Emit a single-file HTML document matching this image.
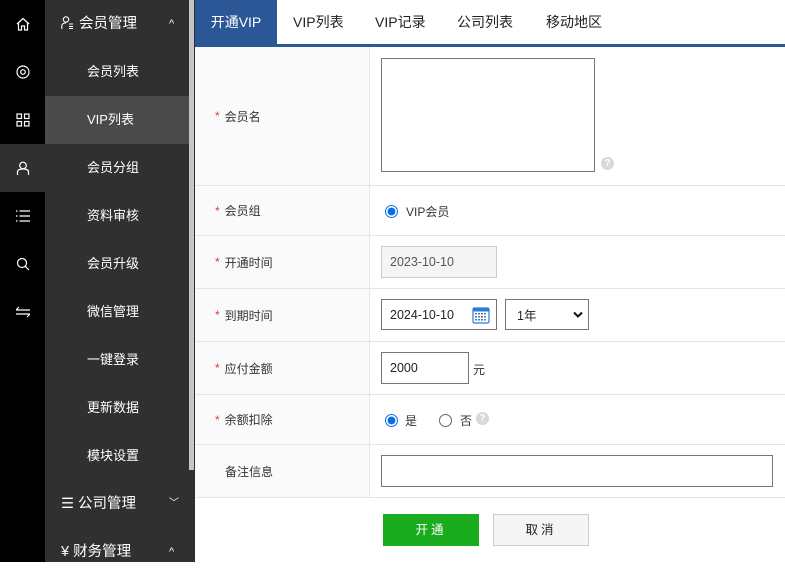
<!DOCTYPE html>
<html><head><meta charset="utf-8"><style>
*{margin:0;padding:0;box-sizing:border-box}
body{width:785px;height:562px;overflow:hidden;background:#fff;font-family:"Liberation Sans","Noto Sans CJK SC",sans-serif;font-size:13px;color:#333;position:relative}
.ic{position:absolute;left:0;top:0;width:45px;height:562px;background:#000}
.ic div{position:absolute;left:0;width:45px;height:48px;display:flex;align-items:center;justify-content:center}
.menu{position:absolute;left:45px;top:0;width:144px;height:562px;background:#303030;color:#fff}
.menu .it{position:absolute;left:0;width:144px;height:48px;line-height:48px;font-size:13px;padding-left:42px}
.menu .hd{padding-left:16px;font-size:14.5px}
.sb{position:absolute;left:189px;top:0;width:6px;height:562px;background:#2f2f2f}
.sb i{position:absolute;left:0;top:0;width:5px;height:470px;background:#c6c6c6}
.tabs{position:absolute;left:195px;top:0;width:590px;height:47px;border-bottom:3px solid #2b5797}
.tabs span{position:absolute;top:0;height:44px;line-height:44px;font-size:14px;color:#222}
.row{position:absolute;left:195px;width:590px;border-bottom:1px solid #e4e4e4}
.lab{position:absolute;left:0;top:0;bottom:0;width:175px;background:#fafafa;border-right:1px solid #e8e8e8;display:flex;align-items:center;padding-left:20px;font-size:12px}
.lab b{color:#e33;font-weight:normal;margin-right:5px}
.inp{position:absolute;border:1px solid #777;background:#fff;font-size:12.5px;color:#222;padding-left:8px;display:flex;align-items:center}
.radio{position:absolute;width:13px;height:13px;border-radius:50%;border:1px solid #666}
.radio.on{border:1px solid #0a6ee8;background:radial-gradient(circle,#0a6ee8 0 3.6px,#fff 4.2px)}
.q{position:absolute;width:13px;height:13px;border-radius:50%;background:#d8d8d8;color:#fff;font-size:10px;font-weight:bold;text-align:center;line-height:13px}
</style></head><body>
<div class="ic">
<div style="top:0"><svg width="16" height="16" viewBox="0 0 16 16" fill="none" stroke="#fff" stroke-width="1.2"><path d="M2 8L8 2.5 14 8M3.5 6.8V14h3v-4h3v4h3V6.8"/></svg></div>
<div style="top:48px"><svg width="16" height="16" viewBox="0 0 16 16" fill="none" stroke="#fff" stroke-width="1.2"><circle cx="8" cy="8" r="6"/><circle cx="8" cy="8" r="2.3"/></svg></div>
<div style="top:96px"><svg width="14" height="14" viewBox="0 0 14 14" fill="none" stroke="#fff" stroke-width="1.2"><rect x="1" y="1" width="4.5" height="4.5"/><rect x="8.5" y="1" width="4.5" height="4.5"/><rect x="1" y="8.5" width="4.5" height="4.5"/><rect x="8.5" y="8.5" width="4.5" height="4.5"/></svg></div>
<div style="top:144px;background:#303030"><svg width="14" height="14" viewBox="0 0 14 14" fill="none" stroke="#fff" stroke-width="1.2"><circle cx="7" cy="4.5" r="3.3"/><path d="M1.5 14V11q0-3 5.5-3t5.5 3v3"/></svg></div>
<div style="top:192px"><svg width="14" height="12" viewBox="0 0 14 12" fill="none" stroke="#fff" stroke-width="1.2"><path d="M0 1h1.5M3.5 1H14M0 6h1.5M3.5 6H14M0 11h1.5M3.5 11H14"/></svg></div>
<div style="top:240px"><svg width="14" height="14" viewBox="0 0 14 14" fill="none" stroke="#fff" stroke-width="1.2"><circle cx="6" cy="6" r="4.5"/><path d="M9.3 9.3L13 13"/></svg></div>
<div style="top:288px"><svg width="14" height="12" viewBox="0 0 14 12" fill="none" stroke="#fff" stroke-width="1.2"><path d="M0 4h14M0 4l3-3M14 8H0M14 8l-3 3"/></svg></div>
</div>
<div class="menu">
<div class="it hd" style="top:0"><svg width="13" height="13" viewBox="0 0 13 13" fill="none" stroke="#fff" stroke-width="1.1" style="vertical-align:-1px;margin-right:5px"><circle cx="5" cy="3.5" r="2.7"/><path d="M0.8 13V10q0-3 4.2-3M8 8h4M8 10.5h4M8 12.5h4"/></svg>会员管理<span style="position:absolute;left:124px;font-size:11px">^</span></div>
<div class="it" style="top:48px">会员列表</div>
<div class="it" style="top:96px;background:#4a4a4a">VIP列表</div>
<div class="it" style="top:144px">会员分组</div>
<div class="it" style="top:192px">资料审核</div>
<div class="it" style="top:240px">会员升级</div>
<div class="it" style="top:288px">微信管理</div>
<div class="it" style="top:336px">一键登录</div>
<div class="it" style="top:384px">更新数据</div>
<div class="it" style="top:432px">模块设置</div>
<div class="it hd" style="top:480px">☰ 公司管理<span style="position:absolute;left:124px;font-size:10px">﹀</span></div>
<div class="it hd" style="top:528px">¥ 财务管理<span style="position:absolute;left:124px;font-size:11px">^</span></div>
</div>
<div class="sb"><i></i></div>
<div class="tabs">
<span style="left:0;width:82px;background:#2b5797;color:#fff;text-align:center">开通VIP</span>
<span style="left:98px">VIP列表</span>
<span style="left:180px">VIP记录</span>
<span style="left:262px">公司列表</span>
<span style="left:351px">移动地区</span>
</div>
<div class="row" style="top:47px;height:139px"><div class="lab"><b>*</b>会员名</div>
<div class="inp" style="left:186px;top:11px;width:214px;height:114px;border-color:#777"></div>
<div class="q" style="left:406px;top:110px">?</div></div>
<div class="row" style="top:186px;height:50px"><div class="lab"><b>*</b>会员组</div>
<div class="radio on" style="left:190px;top:19px"></div><span style="position:absolute;left:211px;top:17px;font-size:12px">VIP会员</span></div>
<div class="row" style="top:236px;height:53px"><div class="lab"><b>*</b>开通时间</div>
<div class="inp" style="left:186px;top:10px;width:116px;height:32px;background:#f5f5f5;border-color:#ccc;color:#555">2023-10-10</div></div>
<div class="row" style="top:289px;height:53px"><div class="lab"><b>*</b>到期时间</div>
<div class="inp" style="left:186px;top:10px;width:116px;height:31px">2024-10-10
<svg style="position:absolute;right:6px;top:6px" width="18" height="18" viewBox="0 0 18 18"><rect x="1" y="2" width="16" height="15" rx="1.5" fill="#fff" stroke="#2a7ad6" stroke-width="1.2"/><rect x="1" y="2" width="16" height="3.5" fill="#2a7ad6"/><g fill="#3a7fd0"><rect x="3" y="7" width="2" height="1.5"/><rect x="6" y="7" width="2" height="1.5"/><rect x="9" y="7" width="2" height="1.5"/><rect x="12" y="7" width="2" height="1.5"/><rect x="3" y="10" width="2" height="1.5"/><rect x="6" y="10" width="2" height="1.5"/><rect x="9" y="10" width="2" height="1.5" fill="#d33"/><rect x="12" y="10" width="2" height="1.5"/><rect x="3" y="13" width="2" height="1.5"/><rect x="6" y="13" width="2" height="1.5"/><rect x="9" y="13" width="2" height="1.5"/><rect x="12" y="13" width="2" height="1.5"/></g></svg></div>
<div class="inp" style="left:310px;top:10px;width:84px;height:31px;padding-left:11px">1年<svg style="position:absolute;right:5px;top:11px" width="10" height="8" viewBox="0 0 10 8"><path d="M1 1.5l4 4 4-4" fill="none" stroke="#111" stroke-width="2"/></svg></div></div>
<div class="row" style="top:342px;height:53px"><div class="lab"><b>*</b>应付金额</div>
<div class="inp" style="left:186px;top:10px;width:88px;height:32px">2000</div><span style="position:absolute;left:278px;top:19px;font-size:12px">元</span></div>
<div class="row" style="top:395px;height:50px"><div class="lab"><b>*</b>余额扣除</div>
<div class="radio on" style="left:190px;top:19px"></div><span style="position:absolute;left:210px;top:17px;font-size:12px">是</span>
<div class="radio" style="left:244px;top:19px"></div><span style="position:absolute;left:265px;top:17px;font-size:12px">否</span>
<div class="q" style="left:281px;top:17px">?</div></div>
<div class="row" style="top:445px;height:53px"><div class="lab" style="padding-left:30px">备注信息</div>
<div class="inp" style="left:186px;top:10px;width:392px;height:32px"></div></div>
<div style="position:absolute;left:383px;top:514px;width:96px;height:32px;background:#1aab1f;color:#fff;text-align:center;line-height:32px;font-size:12.5px;letter-spacing:3px">开通</div>
<div style="position:absolute;left:493px;top:514px;width:96px;height:32px;background:#f5f5f5;border:1px solid #ccc;text-align:center;line-height:30px;font-size:12.5px;letter-spacing:3px;color:#222">取消</div>
</body></html>
